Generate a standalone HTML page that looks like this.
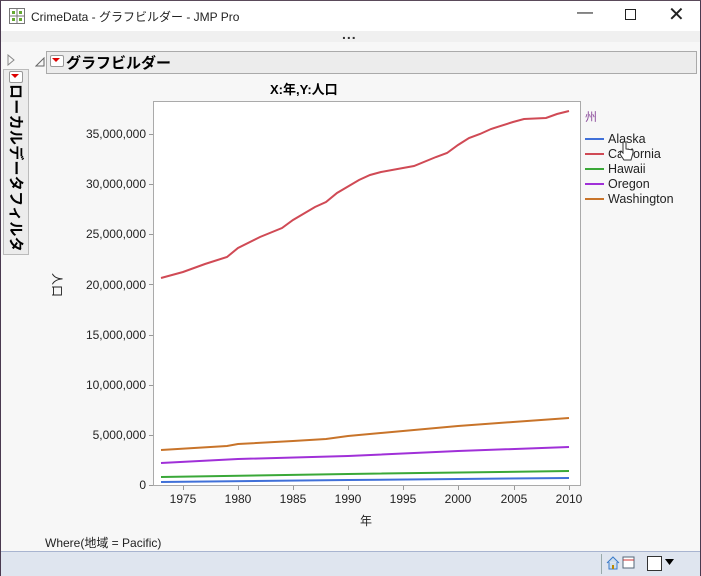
<!DOCTYPE html>
<html><head><meta charset="utf-8"><style>
body{margin:0;width:701px;height:576px;overflow:hidden;font-family:"Liberation Sans","Noto Sans CJK JP",sans-serif;background:#fff;position:relative}
.abs{position:absolute}
</style></head><body>
<div class="abs" style="left:0;top:0;width:701px;height:576px;box-sizing:border-box;border:1px solid #4a3a50;border-top-color:#5a4a5a"></div>
<div class="abs" style="left:1px;top:1px;width:699px;height:30px;background:#fff"></div>
<svg class="abs" style="left:9px;top:8px" width="16" height="16"><rect x="0.5" y="0.5" width="15" height="15" fill="#fff" stroke="#777"/><line x1="8" y1="1" x2="8" y2="15" stroke="#777"/><line x1="1" y1="8" x2="15" y2="8" stroke="#777"/><rect x="3" y="3" width="3" height="3" fill="#6a3"/><rect x="10" y="3" width="3" height="3" fill="#6a3"/><rect x="3" y="10" width="3" height="3" fill="#6a3"/><rect x="10" y="10" width="3" height="3" fill="#6a3"/></svg>
<div class="abs" style="left:31px;top:8px;font-size:12px;color:#222">CrimeData - グラフビルダー - JMP Pro</div>
<div class="abs" style="left:577px;top:4px;font-size:16px;color:#222">&#8212;</div>
<div class="abs" style="left:625px;top:9px;width:9px;height:9px;border:1px solid #222"></div>
<div class="abs" style="left:668px;top:2px;font-size:20px;color:#222">&#10005;</div>
<div class="abs" style="left:1px;top:31px;width:699px;height:11px;background:#f0f0f0"></div>
<div class="abs" style="left:342px;top:26px;font-size:14px;font-weight:bold;color:#333;letter-spacing:1px">...</div>
<div class="abs" style="left:1px;top:42px;width:699px;height:509px;background:#f7f7f7"></div>
<svg class="abs" style="left:7px;top:54px" width="8" height="12"><path d="M1 1 L7 6 L1 11 Z" fill="none" stroke="#888"/></svg>
<svg class="abs" style="left:35px;top:57px" width="10" height="10"><path d="M9 1 L9 9 L1 9 Z" fill="none" stroke="#666"/></svg>
<div class="abs" style="left:3px;top:69px;width:26px;height:186px;background:#ececec;border:1px solid #bbb;box-sizing:border-box"></div>
<div class="abs" style="left:9px;top:71px;width:12px;height:10px;background:#fff;border:1px solid #999;border-radius:2px"></div>
<svg class="abs" style="left:11px;top:74px" width="9" height="5"><path d="M0 0 L8 0 L4 4Z" fill="#d00"/></svg>
<div class="abs" style="left:7px;top:84px;writing-mode:vertical-rl;text-orientation:sideways;font-size:15px;font-weight:bold;color:#000;letter-spacing:0.3px;line-height:16px">ローカルデータフィルタ</div>
<div class="abs" style="left:46px;top:51px;width:651px;height:23px;background:#ececec;border:1px solid #aaa;box-sizing:border-box"></div>
<div class="abs" style="left:50px;top:55px;width:12px;height:10px;background:#fff;border:1px solid #999;border-radius:2px"></div>
<svg class="abs" style="left:52px;top:58px" width="9" height="5"><path d="M0 0 L8 0 L4 4Z" fill="#d00"/></svg>
<div class="abs" style="left:66px;top:52px;font-size:15px;font-weight:bold;color:#000">グラフビルダー</div>
<div class="abs" style="left:270px;top:79px;font-size:13px;font-weight:bold;color:#000">X:年,Y:人口</div>
<svg class="abs" style="left:0;top:0" width="701" height="576" font-family="Liberation Sans, Noto Sans CJK JP, sans-serif">
<rect x="153.5" y="101.5" width="427" height="384" fill="#fff" stroke="#aaa"/>
<g font-size="12" fill="#222" text-anchor="end">
<text x="146" y="489">0</text><text x="146" y="439">5,000,000</text><text x="146" y="389">10,000,000</text><text x="146" y="339">15,000,000</text><text x="146" y="289">20,000,000</text><text x="146" y="238">25,000,000</text><text x="146" y="188">30,000,000</text><text x="146" y="138">35,000,000</text>
</g>
<g stroke="#999"><line x1="149" y1="485.5" x2="153" y2="485.5"/><line x1="149" y1="435.5" x2="153" y2="435.5"/><line x1="149" y1="385.5" x2="153" y2="385.5"/><line x1="149" y1="335.5" x2="153" y2="335.5"/><line x1="149" y1="284.5" x2="153" y2="284.5"/><line x1="149" y1="234.5" x2="153" y2="234.5"/><line x1="149" y1="184.5" x2="153" y2="184.5"/><line x1="149" y1="134.5" x2="153" y2="134.5"/>
<line x1="183.5" y1="486" x2="183.5" y2="490"/><line x1="238.5" y1="486" x2="238.5" y2="490"/><line x1="293.5" y1="486" x2="293.5" y2="490"/><line x1="348.5" y1="486" x2="348.5" y2="490"/><line x1="403.5" y1="486" x2="403.5" y2="490"/><line x1="458.5" y1="486" x2="458.5" y2="490"/><line x1="514.5" y1="486" x2="514.5" y2="490"/><line x1="569.5" y1="486" x2="569.5" y2="490"/></g>
<g font-size="12" fill="#222" text-anchor="middle">
<text x="183" y="503">1975</text><text x="238" y="503">1980</text><text x="293" y="503">1985</text><text x="348" y="503">1990</text><text x="403" y="503">1995</text><text x="458" y="503">2000</text><text x="514" y="503">2005</text><text x="569" y="503">2010</text>
<text x="366" y="525">年</text>
</g>
<text x="0" y="0" font-size="12" fill="#222" transform="translate(53,285) rotate(90)" text-anchor="middle">人口</text>
<g fill="none" stroke-width="2">
<polyline stroke="#d04a55" points="161,278 183,272 205,264 227,257 238,248 260,237 282,228 293,220 315,207 326,202 337,193 359,180 370,175 381,172 403,168 414,166 436,157 447,153 458,145 469,138 480,134 491,129 513,122 524,119 546,118 557,114 569,111"/>
<polyline stroke="#c8742a" points="161,450 227,446 238,444 293,441 326,439 348,436 403,431 458,426 513,422 569,418"/>
<polyline stroke="#a030d8" points="161,463 238,459 348,456 458,451 569,447"/>
<polyline stroke="#3aa838" points="161,477 348,474 569,471"/>
<polyline stroke="#4070d8" points="161,482 348,480 569,478"/>
</g>
<text x="585" y="121" font-size="12" fill="#8a4a9a">州</text>
<g stroke-width="2"><line x1="585" y1="139" x2="604" y2="139" stroke="#4070d8"/><line x1="585" y1="154" x2="604" y2="154" stroke="#d04a55"/><line x1="585" y1="169" x2="604" y2="169" stroke="#3aa838"/><line x1="585" y1="184" x2="604" y2="184" stroke="#a030d8"/><line x1="585" y1="199" x2="604" y2="199" stroke="#c8742a"/></g>
<g font-size="12.5" fill="#222"><text x="608" y="143">Alaska</text><text x="608" y="158">California</text><text x="608" y="173">Hawaii</text><text x="608" y="188">Oregon</text><text x="608" y="203">Washington</text></g>
<path d="M623 142 L623 153 L621 151 L620 154 L624 160 L631 160 L633 153 L633 150 L626 149 L626 142 Z" fill="#fff" stroke="#333"/>
</svg>
<div class="abs" style="left:45px;top:534px;font-size:12px;color:#222">Where(地域 = Pacific)</div>
<div class="abs" style="left:1px;top:551px;width:699px;height:24px;background:#dfe5ef;border-top:1px solid #a8b4d0"></div>
<div class="abs" style="left:601px;top:554px;width:1px;height:20px;background:#9aa"></div>
<svg class="abs" style="left:606px;top:556px" width="30" height="14"><path d="M1 7 L7 1 L13 7 M3 6 V13 H11 V6" fill="#cde" stroke="#3a7ac8"/><rect x="6" y="9" width="2" height="4" fill="#b80"/><rect x="17" y="1" width="11" height="11" fill="#fff" stroke="#567"/><line x1="17" y1="4" x2="28" y2="4" stroke="#c33"/></svg>
<div class="abs" style="left:647px;top:556px;width:13px;height:13px;background:#fff;border:1px solid #333"></div>
<svg class="abs" style="left:665px;top:559px" width="10" height="7"><path d="M0 0 L9 0 L4.5 6Z" fill="#000"/></svg>
</body></html>
